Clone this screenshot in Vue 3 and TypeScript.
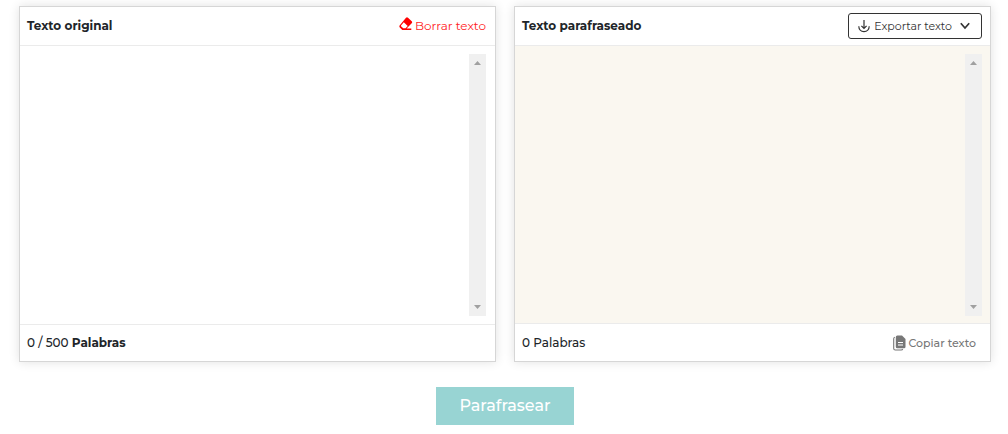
<script setup lang="ts">
import { computed, ref } from 'vue'

const source = ref('')
const result = ref('')
const limit = 500

const countWords = (text: string): number => text.split(/\s+/).filter(Boolean).length
const sourceCount = computed(() => countWords(source.value))
const resultCount = computed(() => countWords(result.value))

function clearText(): void {
  source.value = ''
}
</script>

<template>
  <main class="page">
    <div class="panels">
      <section class="card">
        <header class="head">
          <label class="title" for="source">Texto original</label>
          <button class="clear" type="button" @click="clearText">
            <svg width="14" height="14" viewBox="0 0 14 14" aria-hidden="true">
              <path d="M7 .8 Q8 -.1 9 .8 L12.7 4.3 Q13.6 5.2 12.7 6.2 L7.6 11.5 H12.3 V12.9 H3.3 L.8 10.4 Q-.1 9.4.8 8.3 Z" fill="#f00" />
              <path d="M4.8 5.2 L8.7 9 L6.6 11.3 H4.2 L2 9.2 V8.4 Z" fill="#fff" />
            </svg>
            <span>Borrar texto</span>
          </button>
        </header>
        <div class="body">
          <textarea id="source" v-model="source"></textarea>
          <div class="track" aria-hidden="true">
            <svg width="7" height="4" viewBox="0 0 7 4"><path d="M3.5 0 7 4H0Z" fill="#a0a0a0" /></svg>
            <svg width="7" height="4" viewBox="0 0 7 4"><path d="M0 0H7L3.5 4Z" fill="#a0a0a0" /></svg>
          </div>
        </div>
        <footer class="foot">
          <span class="count">{{ sourceCount }} / {{ limit }} <b>Palabras</b></span>
        </footer>
      </section>

      <section class="card">
        <header class="head">
          <label class="title" for="result">Texto parafraseado</label>
          <button class="export" type="button">
            <svg width="12" height="14" viewBox="0 0 12 14" fill="none" stroke="#333" stroke-width="1.2" aria-hidden="true">
              <path d="M6 1V9.3M3.4 6.8 6 9.4 8.6 6.8M.8 7.2C.8 10.4 3 12.6 6 12.6S11.2 10.4 11.2 7.2" />
            </svg>
            <span>Exportar texto</span>
            <svg class="chevron" width="10" height="8" viewBox="0 0 10 8" fill="none" stroke="#333" stroke-width="1.7" aria-hidden="true">
              <path d="M.8 1.2 5 6 9.2 1.2" />
            </svg>
          </button>
        </header>
        <div class="body cream">
          <textarea id="result" v-model="result" readonly></textarea>
          <div class="track" aria-hidden="true">
            <svg width="7" height="4" viewBox="0 0 7 4"><path d="M3.5 0 7 4H0Z" fill="#a0a0a0" /></svg>
            <svg width="7" height="4" viewBox="0 0 7 4"><path d="M0 0H7L3.5 4Z" fill="#a0a0a0" /></svg>
          </div>
        </div>
        <footer class="foot tall">
          <span class="count">{{ resultCount }} Palabras</span>
          <button class="copy" type="button">
            <svg width="13" height="16" viewBox="0 0 13 16" aria-hidden="true">
              <path d="M1.9 2.3Q.7 2.5.7 3.7V13.4Q.7 15 2.3 15H8.2Q9.4 15 9.7 14" fill="none" stroke="#777" stroke-width="1.1" />
              <path d="M4.3.6H9L12.5 4V11.7Q12.5 13.2 11 13.2H4.3Q2.8 13.2 2.8 11.7V2.1Q2.8.6 4.3.6Z" fill="#777" />
              <path d="M5 7.5H10M5 10H10" stroke="#fff" stroke-width="1.1" />
            </svg>
            <span>Copiar texto</span>
          </button>
        </footer>
      </section>
    </div>
    <button class="submit" type="button">Parafrasear</button>
  </main>
</template>

<style>
body {
  margin: 0;
  background: #fff;
}
</style>

<style scoped>
.page {
  display: flex;
  flex-direction: column;
  align-items: center;
  gap: 25px;
  padding: 6px 17px 9px 19px;
  color: #212529;
  font-family: Montserrat, Inter, "Open Sans", sans-serif;
  font-size: 12px;
}
.panels {
  display: grid;
  grid-template-columns: 1fr 1fr;
  gap: 18px;
  width: 100%;
}
.card {
  display: flex;
  flex-direction: column;
  border: 1px solid #d6d6d6;
  background: #fff;
  box-shadow: 0 0 10px rgba(0, 0, 0, 0.12);
}
.head,
.foot {
  display: flex;
  align-items: center;
  justify-content: space-between;
  box-sizing: border-box;
  padding: 0 8px 2px 7px;
}
.head {
  height: 39px;
  border-bottom: 1px solid #ebebeb;
}
.foot {
  height: 37px;
  border-top: 1px solid #ebebeb;
}
.tall {
  height: 38px;
  padding-bottom: 0;
}
.title {
  font-weight: 700;
}
button {
  display: flex;
  align-items: center;
  padding: 0;
  border: 0;
  background: none;
  font: inherit;
  cursor: pointer;
}
.clear {
  gap: 2px;
  padding-right: 1px;
  color: #ff1d25;
  font-weight: 400;
}
.clear svg {
  margin-bottom: 3px;
}
.export {
  box-sizing: border-box;
  height: 26px;
  margin-top: 2px;
  gap: 4px;
  padding: 0 11px 0 9px;
  border: 1px solid #333;
  border-radius: 3px;
  color: #333;
  font-size: 11px;
}
.chevron {
  margin-left: 4px;
}
.body {
  display: flex;
  flex: 1;
  padding: 8px 9px 8px 8px;
}
.cream {
  padding-right: 8px;
  padding-bottom: 7px;
  background: #faf7f0;
}
textarea {
  flex: 1;
  box-sizing: border-box;
  min-width: 0;
  height: 262px;
  padding: 0;
  border: 0;
  outline: 0;
  resize: none;
  background: transparent;
  color: inherit;
  font: inherit;
}
.track {
  display: flex;
  flex-direction: column;
  align-items: center;
  justify-content: space-between;
  box-sizing: border-box;
  width: 17px;
  padding: 7px 0;
  background: #f0f0f0;
}
.count {
  font-weight: 500;
}
.count b {
  font-weight: 700;
}
.copy {
  gap: 2px;
  padding-right: 6px;
  color: #777;
  font-size: 11px;
  font-weight: 500;
}
.submit {
  height: 38px;
  padding: 0 23px 2px;
  background: #98d4d3;
  color: #fff;
  font-size: 16px;
  font-weight: 500;
}
</style>
